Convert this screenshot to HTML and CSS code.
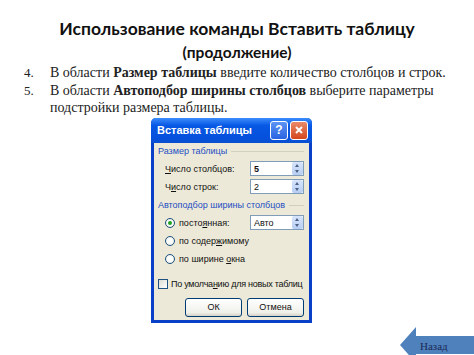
FILE: index.html
```html
<!DOCTYPE html>
<html lang="ru">
<head>
    <meta charset="UTF-8">
    <title>Использование команды Вставить таблицу</title>
    <link rel="stylesheet" href="styles.css">
</head>
<body>

    <div class="slide">
        <h1>Использование команды Вставить таблицу</h1>
        <h2>(продолжение)</h2>

        <ol class="steps">
            <li><span class="num">4.</span><span>В области <b>Размер таблицы</b> введите количество столбцов и строк.</span></li>
            <li><span class="num">5.</span><span>В области <b>Автоподбор ширины столбцов</b> выберите параметры подстройки размера таблицы.</span></li>
        </ol>

        <div class="dialog">
            <div class="titlebar">
                <span class="title">Вставка таблицы</span>
                <span class="tb-btn help">?</span>
                <span class="tb-btn close">
                    <svg width="10" height="10" viewBox="0 0 10 10"><path d="M2 2 L8 8 M8 2 L2 8" stroke="#fff" stroke-width="2"/></svg>
                </span>
            </div>
            <div class="dlg-body">
                <div class="group">Размер таблицы</div>
                <div class="row">
                    <span class="label"><span><u>Ч</u>исло столбцов:</span></span>
                    <span class="spin"><b>5</b><span class="arrows"></span></span>
                </div>
                <div class="row">
                    <span class="label"><span>Ч<u>и</u>сло строк:</span></span>
                    <span class="spin"><span>2</span><span class="arrows"></span></span>
                </div>

                <div class="group second">Автоподбор ширины столбцов</div>
                <div class="row">
                    <span class="label"><span class="radio on"></span><span>посто<u>я</u>нная:</span></span>
                    <span class="spin"><span>Авто</span><span class="arrows"></span></span>
                </div>
                <div class="row"><span class="label"><span class="radio"></span><span>по содер<u>ж</u>имому</span></span></div>
                <div class="row"><span class="label"><span class="radio"></span><span>по ширине <u>о</u>кна</span></span></div>

                <div class="check-row"><span class="check"></span><span>По умолча<u>н</u>ию для новых таблиц</span></div>

                <div class="buttons">
                    <span class="btn">ОК</span>
                    <span class="btn">Отмена</span>
                </div>
            </div>
        </div>

        <div class="back">Назад</div>
    </div>

</body>
</html>
```

FILE: styles.css
```css
body {
    margin: 0;
    background-color: #fff;
    font-family: "Liberation Serif", serif;
}

.slide {
    position: relative;
    width: 474px;
    height: 355px;
    overflow: hidden;
}

h1 {
    margin: 0;
    padding-top: 16px;
    text-align: center;
    font-family: Lato, "Noto Sans", sans-serif;
    font-size: 17.5px;
    line-height: 26px;
    color: #111;
}

h2 {
    margin: 0;
    text-align: center;
    font-family: Lato, "Noto Sans", sans-serif;
    font-size: 15.5px;
    line-height: 20px;
    color: #111;
}

.steps {
    list-style: none;
    margin: 2px 0 0;
    padding: 0 10px 0 24px;
    font-size: 14px;
    line-height: 17.5px;
    color: #222;
}

.steps li {
    display: flex;
}

.steps .num {
    width: 26px;
    flex: none;
    font-size: 13px;
}

.dialog {
    margin: 1px 0 0 151px;
    width: 161px;
    height: 205px;
    box-sizing: border-box;
    border: 3px solid #0a3fc7;
    border-top: none;
    border-radius: 5px 5px 0 0;
    background: #ece9d8;
    font-family: "Liberation Sans", sans-serif;
    font-size: 9px;
    color: #111;
}

.titlebar {
    height: 25px;
    margin: 0 -3px;
    border-radius: 5px 5px 0 0;
    background: linear-gradient(#3c8dfb, #0758e4 30%, #0550dc 80%, #0a4fd0);
    display: flex;
    align-items: center;
    padding: 0 4px 0 6px;
    gap: 2px;
}

.title {
    flex: 1;
    color: #fff;
    font-weight: bold;
    font-size: 11px;
}

.tb-btn {
    width: 16px;
    height: 17px;
    border: 1px solid #fff;
    border-radius: 3px;
    display: flex;
    align-items: center;
    justify-content: center;
    color: #fff;
    font-weight: bold;
    font-size: 12px;
}

.help {
    background: linear-gradient(#5d94f5, #2a63e0);
}

.close {
    background: linear-gradient(#ea8a6a, #d4471d);
}

.dlg-body {
    padding: 0 5px 0 4px;
}

.group {
    display: flex;
    align-items: center;
    gap: 4px;
    height: 17px;
    color: #1d4ec3;
}

.group.second {
    margin-top: 1px;
}

.group::after {
    content: "";
    flex: 1;
    border-top: 1px solid #d0d0bf;
}

.row {
    display: flex;
    align-items: center;
    justify-content: space-between;
    height: 18px;
    padding-left: 7px;
}

.label {
    display: flex;
    align-items: center;
}

.spin {
    width: 54px;
    height: 15px;
    box-sizing: border-box;
    border: 1px solid #7f9db9;
    background: #fff;
    display: flex;
    align-items: center;
    justify-content: space-between;
    padding-left: 3px;
}

.arrows {
    width: 11px;
    height: 13px;
    background: linear-gradient(#d7e5fb, #b6cdf3);
    border-radius: 2px;
    position: relative;
}

.arrows::before,
.arrows::after {
    content: "";
    position: absolute;
    left: 3px;
    border-left: 2.5px solid transparent;
    border-right: 2.5px solid transparent;
}

.arrows::before {
    top: 2px;
    border-bottom: 3px solid #4d6185;
}

.arrows::after {
    bottom: 2px;
    border-top: 3px solid #4d6185;
}

.radio {
    width: 10px;
    height: 10px;
    box-sizing: border-box;
    border: 1px solid #1c5180;
    border-radius: 50%;
    background: radial-gradient(#fff 40%, #dcdcd4);
    margin-right: 4px;
    position: relative;
}

.radio.on::after {
    content: "";
    position: absolute;
    left: 2px;
    top: 2px;
    width: 4px;
    height: 4px;
    border-radius: 50%;
    background: #21a121;
}

.check-row {
    display: flex;
    align-items: center;
    margin-top: 8px;
    height: 16px;
    white-space: nowrap;
    letter-spacing: -0.25px;
}

.check {
    width: 10px;
    height: 10px;
    flex: none;
    box-sizing: border-box;
    border: 1px solid #1c5180;
    background: linear-gradient(135deg, #dcdcd4, #fff);
    margin-right: 3px;
}

.buttons {
    display: flex;
    justify-content: flex-end;
    gap: 5px;
    margin-top: 6px;
}

.btn {
    width: 57px;
    height: 19px;
    box-sizing: border-box;
    border: 1px solid #003c74;
    border-radius: 3px;
    background: linear-gradient(#fff, #f0f0ea 80%, #d6d0c5);
    display: flex;
    align-items: center;
    justify-content: center;
}

.back {
    position: absolute;
    left: 400px;
    top: 327px;
    width: 74px;
    height: 36px;
    box-sizing: border-box;
    padding: 13px 0 0 20px;
    background: #4f81bd;
    clip-path: polygon(0 50%, 16px 0, 16px 25%, 100% 25%, 100% 75%, 16px 75%, 16px 100%);
    font-size: 11px;
    color: #1a2a55;
}
```
